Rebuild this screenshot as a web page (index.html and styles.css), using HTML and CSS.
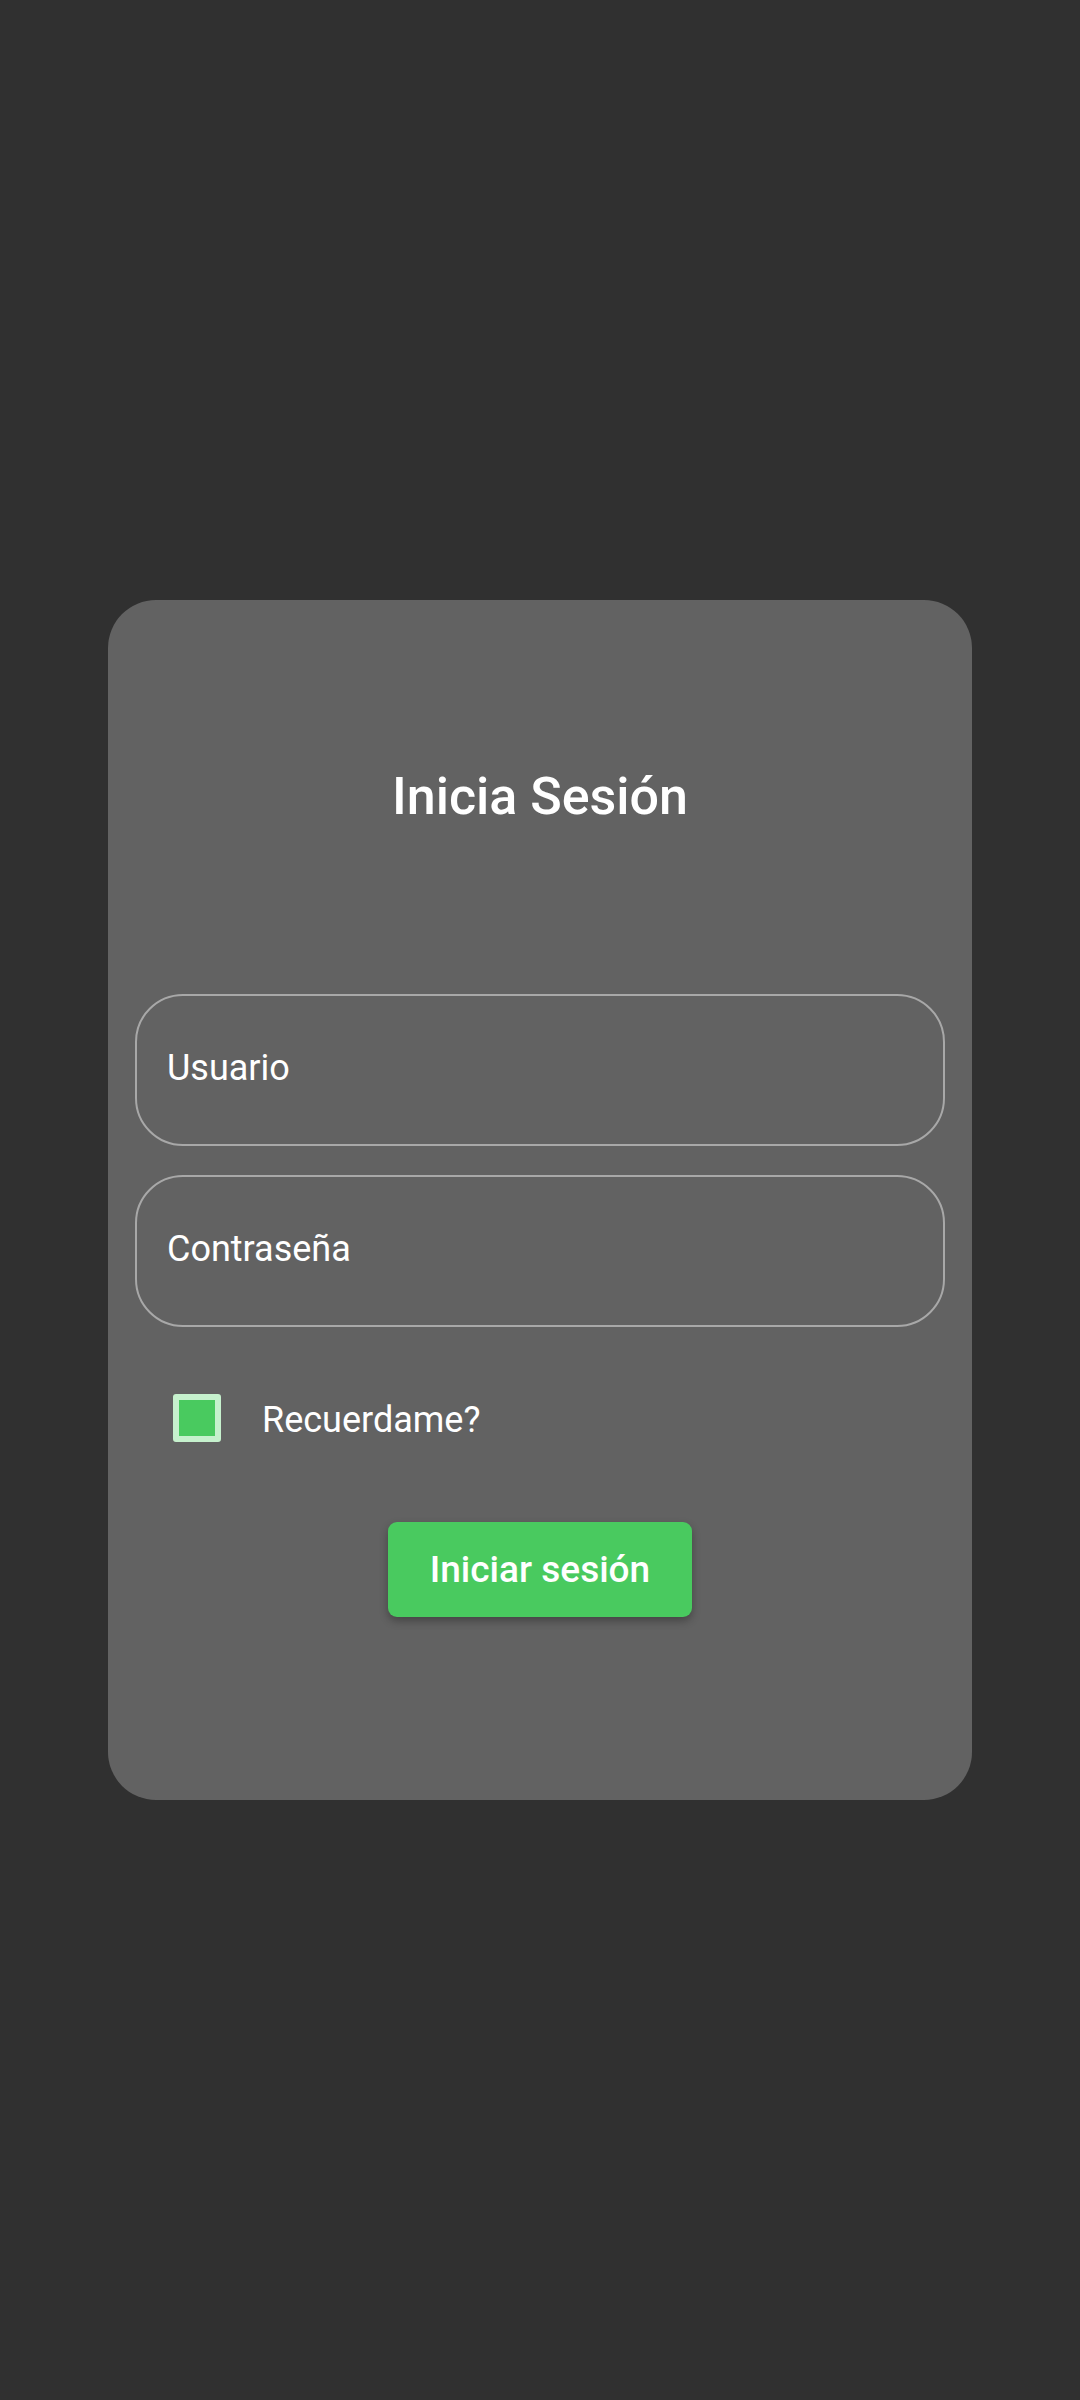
FILE: index.html
```html
<!DOCTYPE html>
<html lang="es">
<head>
<meta charset="utf-8">
<title>Inicia Sesión</title>
<link rel="stylesheet" href="styles.css">
</head>
<body>
<main class="screen">
  <section class="card">
    <h1 class="title">Inicia Sesión</h1>
    <div class="field"><span class="hint">Usuario</span></div>
    <div class="field field-second"><span class="hint">Contraseña</span></div>
    <label class="remember">
      <span class="checkbox"></span>
      <span class="remember-text">Recuerdame?</span>
    </label>
    <button class="submit" type="button">Iniciar sesión</button>
  </section>
</main>
</body>
</html>
```

FILE: styles.css
```css
html, body {
  margin: 0;
  padding: 0;
  background: #303030;
}
body {
  font-family: Roboto, "Noto Sans", sans-serif;
  color: #ffffff;
}
.screen {
  width: 1080px;
  height: 2400px;
  display: flex;
  align-items: center;
  justify-content: center;
}
.card {
  box-sizing: border-box;
  width: 864px;
  height: 1200px;
  background: #626262;
  border-radius: 48px;
  padding: 166px 27px 0;
  display: flex;
  flex-direction: column;
}
.title {
  margin: 0;
  font-size: 52px;
  line-height: 62px;
  font-weight: 500;
  text-align: center;
  color: #ffffff;
}
.field {
  box-sizing: border-box;
  height: 152px;
  margin-top: 166px;
  border: 2px solid #a8a8a8;
  border-radius: 48px;
  display: flex;
  align-items: center;
  padding: 0 0 4px 30px;
}
.field-second {
  margin-top: 29px;
}
.hint {
  font-size: 36px;
  line-height: 42px;
  color: #ffffff;
}
.remember {
  display: flex;
  align-items: center;
  margin-top: 67px;
  margin-left: 38px;
  height: 48px;
}
.checkbox {
  box-sizing: border-box;
  width: 48px;
  height: 48px;
  border: 6px solid #c6f1cd;
  border-radius: 3px;
  background: #49ca5f;
}
.remember-text {
  margin-left: 41px;
  padding-top: 3px;
  font-size: 36px;
  line-height: 44px;
}
.submit {
  align-self: center;
  margin-top: 80px;
  width: 304px;
  height: 95px;
  border: none;
  border-radius: 9px;
  background: #49ca5f;
  color: #ffffff;
  font-family: Roboto, "Noto Sans", sans-serif;
  font-size: 37px;
  font-weight: 500;
  box-shadow: 0 4px 8px rgba(0, 0, 0, 0.3);
  padding: 0;
}
```
